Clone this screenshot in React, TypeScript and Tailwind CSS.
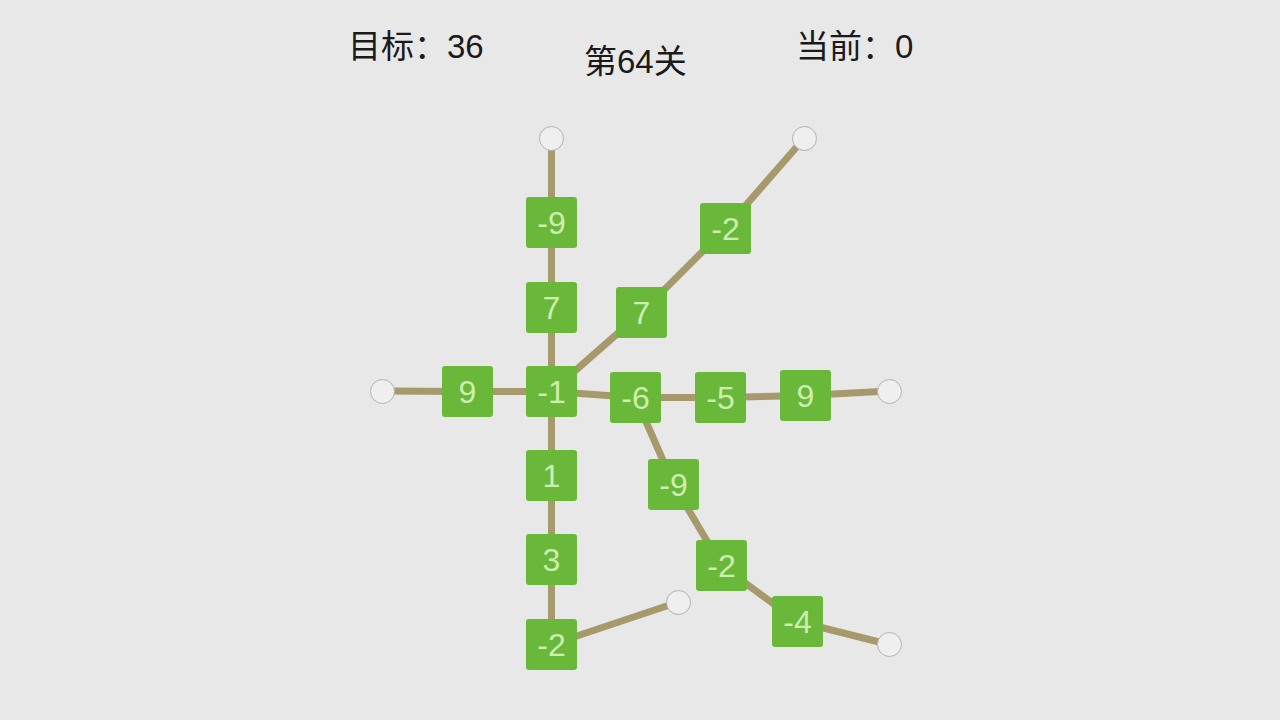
import React from "react";

type N = { id: string; label: string; x: number; y: number };

const nodes: N[] = [
  { id: "a", label: "-9", x: 526, y: 197 },
  { id: "b", label: "7", x: 526, y: 282 },
  { id: "c", label: "-1", x: 526, y: 366 },
  { id: "d", label: "9", x: 442, y: 366 },
  { id: "e", label: "1", x: 526, y: 450 },
  { id: "f", label: "3", x: 526, y: 534 },
  { id: "g", label: "-2", x: 526, y: 619 },
  { id: "h", label: "7", x: 616, y: 287 },
  { id: "i", label: "-2", x: 700, y: 203 },
  { id: "j", label: "-6", x: 610, y: 372 },
  { id: "k", label: "-5", x: 695, y: 372 },
  { id: "l", label: "9", x: 780, y: 370 },
  { id: "m", label: "-9", x: 648, y: 459 },
  { id: "n", label: "-2", x: 696, y: 540 },
  { id: "o", label: "-4", x: 772, y: 596 },
];

const circles: { id: string; x: number; y: number }[] = [
  { id: "c1", x: 551.5, y: 138 },
  { id: "c2", x: 804.5, y: 138 },
  { id: "c3", x: 382.5, y: 391 },
  { id: "c4", x: 889, y: 391 },
  { id: "c5", x: 678.5, y: 602 },
  { id: "c6", x: 889, y: 644.5 },
];

const S = 51;
const pos = (id: string): [number, number] => {
  const n = nodes.find((q) => q.id === id);
  if (n) return [n.x + S / 2, n.y + S / 2];
  const c = circles.find((q) => q.id === id)!;
  return [c.x, c.y];
};

const edges: [string, string][] = [
  ["c1", "a"], ["a", "b"], ["b", "c"], ["c", "e"], ["e", "f"], ["f", "g"], ["g", "c5"],
  ["c3", "d"], ["d", "c"],
  ["c", "h"], ["h", "i"], ["i", "c2"],
  ["c", "j"], ["j", "k"], ["k", "l"], ["l", "c4"],
  ["j", "m"], ["m", "n"], ["n", "o"], ["o", "c6"],
];

export default function App() {
  const font = { fontFamily: '"Liberation Sans", Arial, "Noto Sans CJK SC", sans-serif' };
  return (
    <div className="relative w-[1280px] h-[720px] bg-[#e8e8e8] overflow-hidden text-[#1a1a1a]" style={font}>
      <div className="flex items-start pl-[348px] pt-[27px] text-[33px] leading-[40px]">
        <div className="w-[236px]">目标：36</div>
        <div className="w-[212px] mt-[15px]">第64关</div>
        <div>当前：0</div>
      </div>
      <svg className="absolute inset-0" width="1280" height="720">
        {edges.map(([a, b], i) => {
          const [x1, y1] = pos(a);
          const [x2, y2] = pos(b);
          return <line key={i} x1={x1} y1={y1} x2={x2} y2={y2} stroke="#a69a6d" strokeWidth={7} />;
        })}
      </svg>
      {circles.map((c) => (
        <div
          key={c.id}
          className="absolute w-[25px] h-[25px] rounded-full bg-[#efefef] border border-[#b3b3b3]"
          style={{ left: c.x - 12.5, top: c.y - 12.5 }}
        />
      ))}
      {nodes.map((n) => (
        <div
          key={n.id}
          className="absolute w-[51px] h-[51px] rounded-[3px] bg-[#6ab83a] flex items-center justify-center text-[32px] leading-none text-[#cdeeb0]"
          style={{ left: n.x, top: n.y }}
        >
          {n.label}
        </div>
      ))}
    </div>
  );
}
